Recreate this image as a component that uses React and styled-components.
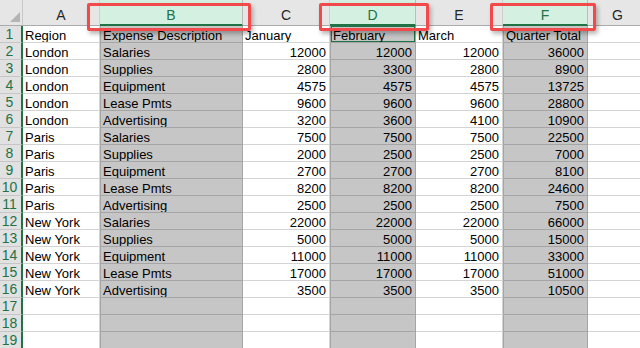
import React from 'react';
import styled, { createGlobalStyle } from 'styled-components';

const GlobalStyle = createGlobalStyle`
  html, body {
    margin: 0;
    padding: 0;
    background: #fff;
    overflow: hidden;
  }
`;

// column widths in px (row header first)
const COLS = [23, 77, 143, 87, 86, 87, 85, 60];
const LETTERS = ['A', 'B', 'C', 'D', 'E', 'F', 'G'];
const SELECTED = [1, 3, 5]; // B, D, F

const rows = [
  ['Region', 'Expense Description', 'January', 'February', 'March', 'Quarter Total'],
  ['London', 'Salaries', 12000, 12000, 12000, 36000],
  ['London', 'Supplies', 2800, 3300, 2800, 8900],
  ['London', 'Equipment', 4575, 4575, 4575, 13725],
  ['London', 'Lease Pmts', 9600, 9600, 9600, 28800],
  ['London', 'Advertising', 3200, 3600, 4100, 10900],
  ['Paris', 'Salaries', 7500, 7500, 7500, 22500],
  ['Paris', 'Supplies', 2000, 2500, 2500, 7000],
  ['Paris', 'Equipment', 2700, 2700, 2700, 8100],
  ['Paris', 'Lease Pmts', 8200, 8200, 8200, 24600],
  ['Paris', 'Advertising', 2500, 2500, 2500, 7500],
  ['New York', 'Salaries', 22000, 22000, 22000, 66000],
  ['New York', 'Supplies', 5000, 5000, 5000, 15000],
  ['New York', 'Equipment', 11000, 11000, 11000, 33000],
  ['New York', 'Lease Pmts', 17000, 17000, 17000, 51000],
  ['New York', 'Advertising', 3500, 3500, 3500, 10500],
  [], [], [],
];

const Wrap = styled.div`
  position: relative;
  width: 640px;
  height: 348px;
  overflow: hidden;
`;

const Sheet = styled.div`
  display: grid;
  grid-template-columns: ${COLS.map(w => w + 'px').join(' ')};
  grid-template-rows: 26px;
  grid-auto-rows: 17px;
  font-family: "Liberation Sans", Arial, sans-serif;
`;

const Corner = styled.div`
  position: relative;
  background: #e6e6e6;
  border-right: 1px solid #c8c8c8;
  border-bottom: 1px solid #ababab;
  box-sizing: border-box;

  svg {
    position: absolute;
    right: 2px;
    bottom: 3px;
  }
`;

const ColHead = styled.div`
  box-sizing: border-box;
  background: ${p => (p.$sel ? '#d3f0e0' : '#e6e6e6')};
  color: ${p => (p.$sel ? '#217346' : '#262626')};
  border-right: 1px solid ${p => (p.$sel ? '#bcbcbc' : '#d0d0d0')};
  border-bottom: ${p => (p.$sel ? '2px solid #217346' : '1px solid #ababab')};
  font-size: 14px;
  text-align: center;
  line-height: 22px;
  padding-top: 4px;
`;

const RowHead = styled.div`
  box-sizing: border-box;
  background: #e1e1e1;
  color: #217346;
  border-right: 2px solid #217346;
  border-bottom: 1px solid #c6c6c6;
  font-size: 14px;
  text-align: center;
  line-height: 17px;
  padding-right: 2px;
`;

const Cell = styled.div`
  box-sizing: border-box;
  background: ${p => (p.$sel ? '#c6c6c6' : '#ffffff')};
  border-right: 1px solid ${p => (p.$sel ? '#a5a5a5' : '#d4d4d4')};
  border-left: ${p => (p.$sel ? '1px solid #a5a5a5' : 'none')};
  border-bottom: 1px solid ${p => (p.$sel ? '#a5a5a5' : '#d4d4d4')};
  box-shadow: ${p => (p.$active ? 'inset 0 0 0 1px #217346' : 'none')};
  color: #000;
  font-size: 13px;
  line-height: 19px;
  padding: 0 ${p => (p.$num ? '3px' : '2px')} 0 2px;
  text-align: ${p => (p.$num ? 'right' : 'left')};
  white-space: nowrap;
  overflow: hidden;
`;

const Callout = styled.div`
  position: absolute;
  top: 3px;
  height: 28px;
  box-sizing: border-box;
  border: 3px solid #f24a4a;
  border-radius: 2px;
  box-shadow: 2px 3px 4px rgba(0, 0, 0, 0.28);
  pointer-events: none;
`;

const callouts = [
  { left: 87, width: 164 },
  { left: 319, width: 110 },
  { left: 490, width: 106 },
];

export default function App() {
  return (
    <Wrap>
      <GlobalStyle />
      <Sheet>
        <Corner>
          <svg width="10" height="10" viewBox="0 0 10 10">
            <polygon points="10,0 10,10 0,10" fill="#b4b4b4" />
          </svg>
        </Corner>
        {LETTERS.map((l, i) => (
          <ColHead key={l} $sel={SELECTED.includes(i)}>{l}</ColHead>
        ))}
        {rows.map((r, ri) => (
          <React.Fragment key={ri}>
            <RowHead>{ri + 1}</RowHead>
            {LETTERS.map((l, ci) => {
              const v = r[ci];
              return (
                <Cell
                  key={l}
                  $sel={SELECTED.includes(ci)}
                  $num={typeof v === 'number'}
                  $active={ri === 0 && ci === 3}
                >
                  {v}
                </Cell>
              );
            })}
          </React.Fragment>
        ))}
      </Sheet>
      {callouts.map((c, i) => (
        <Callout key={i} style={{ left: c.left, width: c.width }} />
      ))}
    </Wrap>
  );
}
